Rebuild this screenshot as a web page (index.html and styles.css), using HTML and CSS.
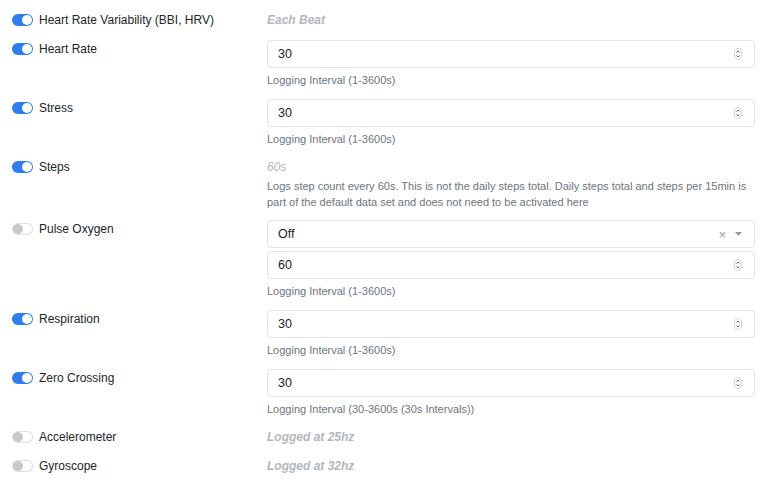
FILE: index.html
```html
<!DOCTYPE html>
<html>
<head>
	<meta charset="utf-8">
	<title>Data Logging</title>
<link rel="stylesheet" href="styles.css">
</head>

<body>

<div class="row">
	<div class="label"><span class="switch on"></span>Heart Rate Variability (BBI, HRV)</div>
	<div class="value"><div class="fixed">Each Beat</div></div>
</div>

<div class="row">
	<div class="label"><span class="switch on"></span>Heart Rate</div>
	<div class="value input_col">
		<div class="field"><span>30</span><svg class="spin" width="8" height="12" viewBox="0 0 8 12"><rect x="0.5" y="0.5" width="7" height="11" rx="3.5" fill="none" stroke="#d6d6d6"/><path d="M2.5 4.5 L4 3 L5.5 4.5 M2.5 7.5 L4 9 L5.5 7.5" fill="none" stroke="#555" stroke-width="0.9"/></svg></div>
		<div class="help">Logging Interval (1-3600s)</div>
	</div>
</div>

<div class="row">
	<div class="label"><span class="switch on"></span>Stress</div>
	<div class="value input_col">
		<div class="field"><span>30</span><svg class="spin" width="8" height="12" viewBox="0 0 8 12"><rect x="0.5" y="0.5" width="7" height="11" rx="3.5" fill="none" stroke="#d6d6d6"/><path d="M2.5 4.5 L4 3 L5.5 4.5 M2.5 7.5 L4 9 L5.5 7.5" fill="none" stroke="#555" stroke-width="0.9"/></svg></div>
		<div class="help">Logging Interval (1-3600s)</div>
	</div>
</div>

<div class="row">
	<div class="label"><span class="switch on"></span>Steps</div>
	<div class="value">
		<div class="fixed light">60s</div>
		<div class="help long">Logs step count every 60s. This is not the daily steps total. Daily steps total and steps per 15min is<br>part of the default data set and does not need to be activated here</div>
	</div>
</div>

<div class="row">
	<div class="label"><span class="switch"></span>Pulse Oxygen</div>
	<div class="value input_col">
		<div class="field select"><span>Off</span><span class="clear">&times;</span><svg class="caret" width="7" height="4" viewBox="0 0 7 4"><path d="M0 0 H7 L3.5 4 Z" fill="#999"/></svg></div>
		<div class="field"><span>60</span><svg class="spin" width="8" height="12" viewBox="0 0 8 12"><rect x="0.5" y="0.5" width="7" height="11" rx="3.5" fill="none" stroke="#d6d6d6"/><path d="M2.5 4.5 L4 3 L5.5 4.5 M2.5 7.5 L4 9 L5.5 7.5" fill="none" stroke="#555" stroke-width="0.9"/></svg></div>
		<div class="help">Logging Interval (1-3600s)</div>
	</div>
</div>

<div class="row">
	<div class="label"><span class="switch on"></span>Respiration</div>
	<div class="value input_col">
		<div class="field"><span>30</span><svg class="spin" width="8" height="12" viewBox="0 0 8 12"><rect x="0.5" y="0.5" width="7" height="11" rx="3.5" fill="none" stroke="#d6d6d6"/><path d="M2.5 4.5 L4 3 L5.5 4.5 M2.5 7.5 L4 9 L5.5 7.5" fill="none" stroke="#555" stroke-width="0.9"/></svg></div>
		<div class="help">Logging Interval (1-3600s)</div>
	</div>
</div>

<div class="row">
	<div class="label"><span class="switch on"></span>Zero Crossing</div>
	<div class="value input_col">
		<div class="field"><span>30</span><svg class="spin" width="8" height="12" viewBox="0 0 8 12"><rect x="0.5" y="0.5" width="7" height="11" rx="3.5" fill="none" stroke="#d6d6d6"/><path d="M2.5 4.5 L4 3 L5.5 4.5 M2.5 7.5 L4 9 L5.5 7.5" fill="none" stroke="#555" stroke-width="0.9"/></svg></div>
		<div class="help">Logging Interval (30-3600s (30s Intervals))</div>
	</div>
</div>

<div class="row">
	<div class="label"><span class="switch"></span>Accelerometer</div>
	<div class="value"><div class="fixed">Logged at 25hz</div></div>
</div>

<div class="row">
	<div class="label"><span class="switch"></span>Gyroscope</div>
	<div class="value"><div class="fixed">Logged at 32hz</div></div>
</div>

</body>

</html>
```

FILE: styles.css
```css
body {
	margin: 0;
	padding: 10px 13px 0 12px;
	background-color: #fff;

	font-family: "Liberation Sans", Arial, sans-serif;
	font-size: 12px;
	color: #212529;
}

.row {
	display: grid;
	grid-template-columns: 255px 1fr;
	margin-bottom: 9px;
}

.label {
	display: flex;
	align-items: center;
	height: 20px;
	line-height: 20px;
}

.switch {
	position: relative;
	display: inline-block;
	width: 21px;
	height: 12px;
	margin-right: 6px;

	border-radius: 6px;
	background-color: #fff;
	box-shadow: inset 0 0 0 1px #dcdcdc;
}

.switch::after {
	content: "";
	position: absolute;
	left: 1px;
	top: 1px;
	width: 10px;
	height: 10px;
	border-radius: 50%;
	background-color: #c6c8cc;
}

.switch.on {
	background-color: #2f7cf0;
	box-shadow: none;
}

.switch.on::after {
	left: auto;
	right: 1px;
	background-color: #fff;
}

.fixed {
	height: 20px;
	line-height: 20px;
	font-style: italic;
	font-weight: bold;
	color: #b3b7bc;
}

.fixed.light {
	font-weight: normal;
}

.input_col {
	padding-top: 1px;
}

.field {
	display: flex;
	align-items: center;
	height: 28px;
	padding: 0 12px 0 10px;

	border: #e2e3e5 1px solid;
	border-radius: 4px;
	box-sizing: border-box;

	font-size: 12.5px;
	color: #212529;
}

.field span:first-child {
	flex: 1;
}

.field + .field {
	margin-top: 3px;
}

.select .clear {
	margin-right: 9px;
	font-size: 13px;
	color: #9a9a9a;
}

.help {
	margin-top: 3px;
	line-height: 18px;
	font-size: 11px;
	color: #6c757d;
}

.help.long {
	margin-top: 1px;
	line-height: 16px;
	white-space: nowrap;
}
```
